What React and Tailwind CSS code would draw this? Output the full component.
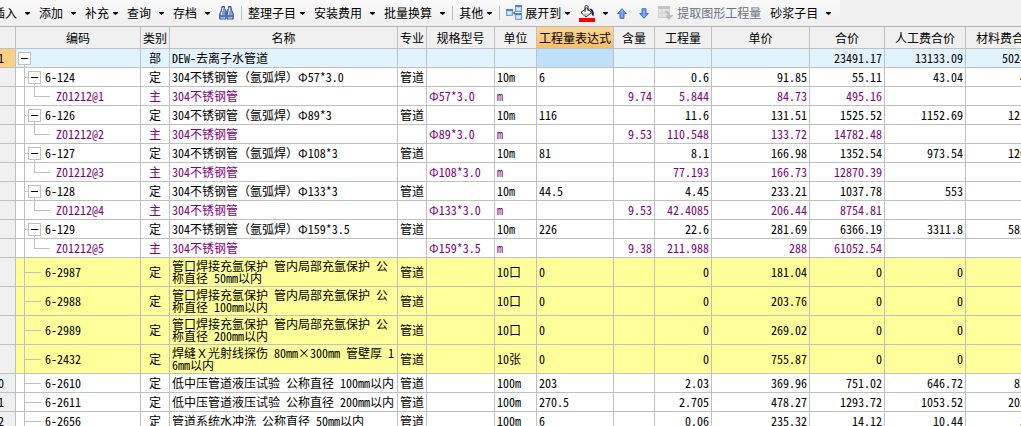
import clsx from 'clsx';

const columns = [
  { key: 'no', title: '', width: 26 },
  { key: 'code', title: '编码', width: 125 },
  { key: 'kind', title: '类别', width: 29, align: 'center' },
  { key: 'name', title: '名称', width: 228 },
  { key: 'major', title: '专业', width: 29 },
  { key: 'spec', title: '规格型号', width: 68 },
  { key: 'unit', title: '单位', width: 42 },
  { key: 'expr', title: '工程量表达式', width: 77 },
  { key: 'content', title: '含量', width: 41, align: 'right' },
  { key: 'qty', title: '工程量', width: 57, align: 'right' },
  { key: 'price', title: '单价', width: 98, align: 'right' },
  { key: 'total', title: '合价', width: 75, align: 'right' },
  { key: 'labor', title: '人工费合价', width: 81, align: 'right' },
  { key: 'material', title: '材料费合价', width: 81, align: 'right' },
];

const rows = [
  { type: 'root', no: 'B1', kind: '部', name: 'DEW-去离子水管道', total: '23491.17', labor: '13133.09', material: '5024.61' },
  { type: 'parent', no: '1', code: '6-124', kind: '定', name: '304不锈钢管（氩弧焊）Φ57*3.0', major: '管道', unit: '10m', expr: '6', qty: '0.6', price: '91.85', total: '55.11', labor: '43.04', material: '4.32' },
  { type: 'main', code: 'Z01212@1', kind: '主', name: '304不锈钢管', spec: 'Φ57*3.0', unit: 'm', content: '9.74', qty: '5.844', price: '84.73', total: '495.16' },
  { type: 'parent', no: '2', code: '6-126', kind: '定', name: '304不锈钢管（氩弧焊）Φ89*3', major: '管道', unit: '10m', expr: '116', qty: '11.6', price: '131.51', total: '1525.52', labor: '1152.69', material: '121.34' },
  { type: 'main', code: 'Z01212@2', kind: '主', name: '304不锈钢管', spec: 'Φ89*3.0', unit: 'm', content: '9.53', qty: '110.548', price: '133.72', total: '14782.48' },
  { type: 'parent', no: '3', code: '6-127', kind: '定', name: '304不锈钢管（氩弧焊）Φ108*3', major: '管道', unit: '10m', expr: '81', qty: '8.1', price: '166.98', total: '1352.54', labor: '973.54', material: '126.04' },
  { type: 'main', code: 'Z01212@3', kind: '主', name: '304不锈钢管', spec: 'Φ108*3.0', unit: 'm', qty: '77.193', price: '166.73', total: '12870.39' },
  { type: 'parent', no: '4', code: '6-128', kind: '定', name: '304不锈钢管（氩弧焊）Φ133*3', major: '管道', unit: '10m', expr: '44.5', qty: '4.45', price: '233.21', total: '1037.78', labor: '553' },
  { type: 'main', code: 'Z01212@4', kind: '主', name: '304不锈钢管', spec: 'Φ133*3.0', unit: 'm', content: '9.53', qty: '42.4085', price: '206.44', total: '8754.81' },
  { type: 'parent', no: '5', code: '6-129', kind: '定', name: '304不锈钢管（氩弧焊）Φ159*3.5', major: '管道', unit: '10m', expr: '226', qty: '22.6', price: '281.69', total: '6366.19', labor: '3311.8', material: '581.27' },
  { type: 'main', code: 'Z01212@5', kind: '主', name: '304不锈钢管', spec: 'Φ159*3.5', unit: 'm', content: '9.38', qty: '211.988', price: '288', total: '61052.54' },
  { type: 'leaf', marked: true, no: '6', code: '6-2987', kind: '定', name: '管口焊接充氩保护 管内局部充氩保护 公称直径 50mm以内', major: '管道', unit: '10口', expr: '0', qty: '0', price: '181.04', total: '0', labor: '0', material: '0' },
  { type: 'leaf', marked: true, no: '7', code: '6-2988', kind: '定', name: '管口焊接充氩保护 管内局部充氩保护 公称直径 100mm以内', major: '管道', unit: '10口', expr: '0', qty: '0', price: '203.76', total: '0', labor: '0', material: '0' },
  { type: 'leaf', marked: true, no: '8', code: '6-2989', kind: '定', name: '管口焊接充氩保护 管内局部充氩保护 公称直径 200mm以内', major: '管道', unit: '10口', expr: '0', qty: '0', price: '269.02', total: '0', labor: '0', material: '0' },
  { type: 'leaf', marked: true, no: '9', code: '6-2432', kind: '定', name: '焊缝Ｘ光射线探伤 80mm×300mm 管壁厚 16mm以内', major: '管道', unit: '10张', expr: '0', qty: '0', price: '755.87', total: '0', labor: '0', material: '0' },
  { type: 'leaf', no: '10', code: '6-2610', kind: '定', name: '低中压管道液压试验 公称直径 100mm以内', major: '管道', unit: '100m', expr: '203', qty: '2.03', price: '369.96', total: '751.02', labor: '646.72', material: '81.20' },
  { type: 'leaf', no: '11', code: '6-2611', kind: '定', name: '低中压管道液压试验 公称直径 200mm以内', major: '管道', unit: '100m', expr: '270.5', qty: '2.705', price: '478.27', total: '1293.72', labor: '1053.52', material: '205.58' },
  { type: 'leaf', no: '12', code: '6-2656', kind: '定', name: '管道系统水冲洗 公称直径 50mm以内', major: '管道', unit: '100m', expr: '6', qty: '0.06', price: '235.32', total: '14.12', labor: '10.44', material: '3.60' },
];

function Arrow() {
  return (
    <svg width="5" height="3" viewBox="0 0 5 3" className="shrink-0" aria-hidden="true">
      <path d="M0 0h5v1L2.500 3 0 1z" fill="#000" />
    </svg>
  );
}

function Binoculars() {
  return (
    <svg width="15" height="14" viewBox="0 0 15 14" aria-hidden="true">
      <path d="M3 .5h2.5v2L7 5v8H.7V8L2.5 4zM12 .5H9.5v2L8 5v8h6.300V8L12.500 4z" fill="#7fa3d8" stroke="#33589c" />
      <path d="M6 5.500h3v3H6z" fill="#44699f" />
      <path d="M3.500 2v3M10.500 2v3M2.500 6v3M9.500 6v3" stroke="#e6f0ff" />
      <path d="M1 10h5.500M8.500 10H14" stroke="#2b4e92" />
      <path d="M2 12h4M9 12h4" stroke="#a9c6ee" />
    </svg>
  );
}

function ExpandIcon() {
  return (
    <svg width="16" height="16" viewBox="0 0 16 16" aria-hidden="true">
      <path d="M5 8h3M8 8l3-4M8 8l3 4" fill="none" stroke="#46505e" />
      <rect x="0.500" y="4.500" width="6" height="6" fill="#b9d7f8" stroke="#6f9fe0" />
      <path d="M0 5h7" stroke="#4b82ce" strokeWidth="2" />
      <path d="M2 8h3" stroke="#fff" />
      <rect x="9.500" y="0.500" width="6" height="6" fill="#b9d7f8" stroke="#6f9fe0" />
      <path d="M9 1h7" stroke="#4b82ce" strokeWidth="2" />
      <path d="M11 4h3" stroke="#fff" />
      <rect x="9.500" y="8.500" width="6" height="6" fill="#b9d7f8" stroke="#6f9fe0" />
      <path d="M9 9h7" stroke="#4b82ce" strokeWidth="2" />
      <path d="M11 12h3" stroke="#fff" />
    </svg>
  );
}

function FillIcon() {
  return (
    <svg width="16" height="17" viewBox="0 0 16 17" aria-hidden="true">
      <path d="M2 7.500L7.500 3l5 4.500L7 12z" fill="#fff" stroke="#222" />
      <path d="M4 9l6-1-3.500 3.500z" fill="#bbb" />
      <path d="M6 7V1.500C6 .3 9 .3 9 1.500V6" fill="none" stroke="#222" />
      <path d="M10 3.500c4 0 5.500 3 4.500 8-1.500-1-2.500-3-2-5z" fill="#10107c" />
      <path d="M0 13h16v4H0z" fill="#f00" />
    </svg>
  );
}

function MoveArrow({ down }) {
  return (
    <svg width="10" height="11" viewBox="0 0 10 11" className={clsx(down && 'rotate-180')} aria-hidden="true">
      <path d="M5 .7L9.300 5.500H7v4.800H3V5.500H.7z" fill="#5f9af5" stroke="#3f74d6" />
      <path d="M5 2v7.500" stroke="#8fb9ff" />
    </svg>
  );
}

function ExtractIcon() {
  return (
    <svg width="16" height="16" viewBox="0 0 16 16" aria-hidden="true">
      <path d="M.5 1.500h11v11H.5z" fill="#e3e3e3" stroke="#cfcfcf" />
      <path d="M0 2.500h12" stroke="#c4c4c4" strokeWidth="3" />
      <path d="M0 8h12M4 4v8" stroke="#d2d2d2" />
      <path d="M6 6.500c4-1 6 0 6 3.500h3.500L11 15l-4-4.500h2.500C9.500 8.500 8.500 7.500 6 6.500z" fill="#bcbcbc" />
    </svg>
  );
}

function ToolButton({ children, arrow, split, ...props }) {
  return (
    <button type="button" className="flex h-5 shrink-0 items-center pr-[9px] whitespace-nowrap disabled:text-gray-500" {...props}>
      {children}
      {arrow && (
        <span className={split ? 'pl-2' : 'pl-1'}>
          <Arrow />
        </span>
      )}
    </button>
  );
}

function Separator() {
  return <span className="mr-[6px] -ml-[2px] h-[14px] w-px shrink-0 bg-[#bdbdbd]" />;
}

function Toolbar() {
  return (
    <div className="h-[27px] border-b border-[#b4b4b4] bg-[#f0f0f0]">
      <div className="flex h-[23px] w-max items-center bg-linear-to-b from-[#fafafa] to-[#efefef] pt-[3px] pl-[3px]">
        <ToolButton arrow split>插入</ToolButton>
        <ToolButton arrow split>添加</ToolButton>
        <ToolButton arrow>补充</ToolButton>
        <ToolButton arrow split>查询</ToolButton>
        <ToolButton arrow split>存档</ToolButton>
        <ToolButton aria-label="查找"><Binoculars /></ToolButton>
        <Separator />
        <ToolButton arrow>整理子目</ToolButton>
        <ToolButton arrow split>安装费用</ToolButton>
        <ToolButton arrow split>批量换算</ToolButton>
        <Separator />
        <ToolButton arrow>其他</ToolButton>
        <Separator />
        <ToolButton arrow>
          <span className="pr-[3px]"><ExpandIcon /></span>
          展开到
        </ToolButton>
        <ToolButton arrow split aria-label="填充颜色"><FillIcon /></ToolButton>
        <div className="flex gap-[3px]">
          <ToolButton aria-label="上移"><MoveArrow /></ToolButton>
          <ToolButton aria-label="下移"><MoveArrow down /></ToolButton>
        </div>
        <ToolButton disabled>
          <span className="pr-[3px]"><ExtractIcon /></span>
          提取图形工程量
        </ToolButton>
        <ToolButton arrow split>砂浆子目</ToolButton>
      </div>
    </div>
  );
}

function Toggle() {
  return (
    <div className="flex h-full flex-col items-center pt-[3px]">
      <button
        type="button"
        aria-label="折叠"
        aria-expanded="true"
        className="flex size-[13px] shrink-0 items-center justify-center border border-[#c0c0c0] bg-white"
      >
        <span className="h-px w-[7px] bg-black" />
      </button>
      <span className="w-px flex-1 bg-[#c0c0c0]" />
    </div>
  );
}

function CodeCell({ row }) {
  if (row.type === 'root') {
    return (
      <div className="flex h-[18px] pl-[2px]">
        <Toggle />
      </div>
    );
  }
  return (
    <div className={clsx('flex items-center', row.marked ? 'h-7' : 'h-[18px]')}>
      <span className="h-full w-[9px] border-r border-[#c0c0c0]" />
      {row.type === 'parent' && (
        <>
          <span className="h-px w-[3px] bg-[#c0c0c0]" />
          <Toggle />
        </>
      )}
      {row.type === 'leaf' && <span className="h-px w-4 bg-[#c0c0c0]" />}
      {row.type === 'main' && <span className="ml-[9px] h-[10px] w-4 self-start border-b border-l border-[#c0c0c0]" />}
      <span className={row.type === 'main' ? 'pl-[6px]' : 'pl-1'}>{row.code}</span>
    </div>
  );
}

function Row({ row }) {
  const root = row.type === 'root';
  return (
    <tr
      className={clsx(
        row.marked ? 'h-[29px] bg-[#ffff99]' : 'h-[19px]',
        root && 'bg-[#e1f3ff]',
        row.type === 'main' && 'text-[#800080]',
      )}
    >
      {columns.map(({ key, align }) => (
        <td
          key={key}
          className={clsx(
            'overflow-hidden border-r border-b border-[#c0c0c0]',
            key !== 'code' && 'px-[2px]',
            key === 'name' ? 'break-all' : 'whitespace-nowrap',
            align === 'right' && 'text-right',
            align === 'center' && 'text-center',
            key === 'no' && (root ? 'bg-[#ffd083]' : 'bg-[#f0f0f0]'),
            key === 'expr' && root && 'bg-[#bfe0fa]',
          )}
        >
          {key === 'code' ? <CodeCell row={row} /> : row[key]}
        </td>
      ))}
    </tr>
  );
}

export default function App() {
  return (
    <div className="h-screen overflow-hidden bg-white font-['Noto_Sans_Mono_CJK_SC','Noto_Sans_CJK_SC',sans-serif] text-[12px] leading-[12px] text-black">
      {/* grid and toolbar are scrolled slightly to the right */}
      <div className="-ml-[10px]">
        <Toolbar />
        <table className="w-[calc(100%+26px)] table-fixed border-separate border-spacing-0">
          <colgroup>
            {columns.map((c) => (
              <col key={c.key} style={{ width: c.width }} />
            ))}
          </colgroup>
          <thead>
            <tr className="h-[22px] bg-[#f0f0f0]">
              {columns.map((c) => (
                <th
                  key={c.key}
                  className={clsx(
                    'border-r border-b border-[#c0c0c0] font-normal whitespace-nowrap',
                    c.key === 'expr' && 'bg-linear-to-b from-[#fbd595] to-[#f6bf68]',
                  )}
                >
                  {c.title}
                </th>
              ))}
            </tr>
          </thead>
          <tbody>
            {rows.map((row, i) => (
              <Row key={i} row={row} />
            ))}
          </tbody>
        </table>
      </div>
    </div>
  );
}
